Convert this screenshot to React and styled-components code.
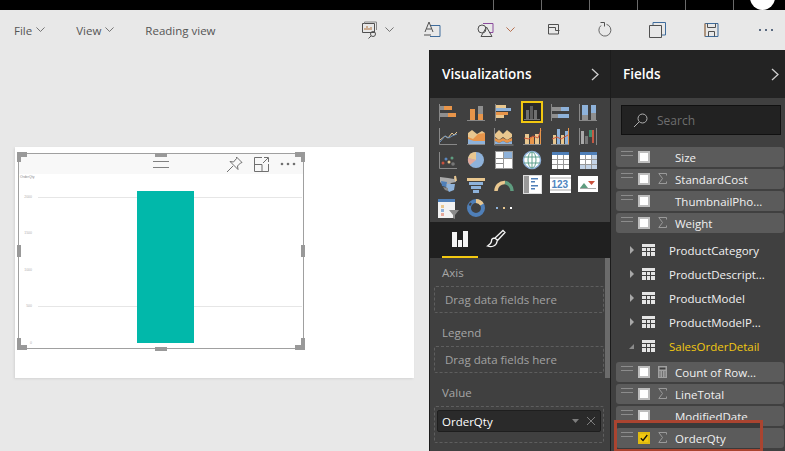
import React from "react";
import styled, { createGlobalStyle } from "styled-components";

const GlobalStyle = createGlobalStyle`
  html, body { margin: 0; padding: 0; background: #e8e8e8; }
  body { width: 785px; height: 451px; overflow: hidden; font-family: "Open Sans", "Noto Sans", sans-serif; }
`;

const Page = styled.div`
  width: 785px;
  height: 451px;
  display: flex;
  flex-direction: column;
  overflow: hidden;
`;

const TopBar = styled.div`
  height: 10px;
  flex: none;
  background: #000;
  position: relative;
  overflow: hidden;
  display: flex;
  padding-left: 493px;
  gap: 47px;
`;
const TopTick = styled.i`
  width: 1px;
  height: 10px;
  background: #6a6a6a;
`;
const TopAvatar = styled.i`
  position: absolute;
  left: 750px;
  top: -15px;
  width: 25px;
  height: 25px;
  border-radius: 50%;
  background: #fff;
`;

const Toolbar = styled.div`
  height: 40px;
  flex: none;
  background: #e8e8e8;
  display: flex;
  align-items: center;
  padding-left: 14px;
  color: #555;
  font-size: 11.5px;
`;
const MenuItem = styled.span`
  display: flex;
  align-items: center;
  gap: 4px;
  margin-right: ${(p) => p.$gap}px;
`;
const ToolIcon = styled.svg`
  flex: none;
  width: ${(p) => p.$w}px;
  height: 20px;
  margin-left: ${(p) => p.$left || 0}px;
  fill: none;
  stroke: #505050;
  stroke-width: 1;
`;
const ToolChevron = styled.span`
  flex: none;
  width: 10px;
  height: 20px;
  margin-left: ${(p) => p.$left}px;
  display: flex;
  align-items: center;
`;

const Body = styled.div`
  flex: 1;
  min-height: 0;
  display: flex;
`;

const Canvas = styled.div`
  width: 429px;
  flex: none;
  box-sizing: border-box;
  padding: 97px 15px 0;
`;
const ReportPage = styled.div`
  width: 399px;
  height: 231px;
  background: #fff;
  box-shadow: -1px 1px 2px #d4d4d4;
  padding: 6px 0 0 3px;
  box-sizing: border-box;
`;
const Visual = styled.div`
  width: 286px;
  height: 196px;
  box-sizing: border-box;
  border: 1px solid #a0a0a0;
  position: relative;
`;
const VisualHeader = styled.div`
  height: 20px;
  background: #f8f8f8;
  display: flex;
  align-items: center;
  padding-right: 7px;
  justify-content: flex-end;
  gap: 11px;
`;
const VisualGrip = styled.span`
  width: 16px;
  height: 5px;
  margin-right: 46px;
  border-top: 1px solid #808080;
  border-bottom: 1px solid #808080;
`;
const Handle = styled.i`
  position: absolute;
  background: #999;
  left: ${(p) => p.$x}px;
  top: ${(p) => p.$y}px;
  width: ${(p) => p.$w}px;
  height: ${(p) => p.$h}px;
`;
const ChartSvg = styled.svg`
  display: block;
`;

const Panel = styled.div`
  flex: none;
  width: ${(p) => p.$w}px;
  background: #404040;
  border-left: 1px solid #1c1c1c;
  display: flex;
  flex-direction: column;
  overflow: hidden;
`;
const PanelHeader = styled.div`
  height: 48px;
  flex: none;
  box-sizing: border-box;
  background: #232323;
  color: #fff;
  font-size: 13.5px;
  font-weight: 600;
  display: flex;
  align-items: center;
  justify-content: space-between;
  padding: 0 ${(p) => p.$right}px 0 12px;
`;

const VizGrid = styled.div`
  height: 124px;
  flex: none;
  box-sizing: border-box;
  padding: 3px 0 0 7px;
  display: grid;
  grid-template-columns: repeat(6, 22px);
  grid-auto-rows: 22px;
  column-gap: 6px;
  row-gap: 2px;
`;
const VizCell = styled.svg`
  width: 22px;
  height: 22px;
  display: block;
`;
const TabStrip = styled.div`
  height: 36px;
  flex: none;
  box-sizing: border-box;
  background: #202020;
  display: flex;
  padding-left: 12px;
`;
const Tab = styled.div`
  width: 36px;
  height: 36px;
  box-sizing: border-box;
  display: flex;
  align-items: center;
  justify-content: center;
  border-bottom: 2px solid ${(p) => (p.$active ? "#f2c811" : "transparent")};
`;
const Wells = styled.div`
  flex: 1;
  position: relative;
  padding: 7px 6px 0 4px;
`;
const ScrollThumb = styled.i`
  position: absolute;
  right: 0;
  top: 0;
  width: 5px;
  height: 120px;
  background: #6b6b6b;
`;
const WellLabel = styled.div`
  font-size: 11.5px;
  line-height: 16px;
  height: 16px;
  color: #a6a6a6;
  margin: 0 0 5px 8px;
`;
const Well = styled.div`
  box-sizing: border-box;
  border: 1px dashed #5e5e5e;
  border-radius: 2px;
  height: ${(p) => p.$h}px;
  padding: ${(p) => (p.$filled ? "3px 2px" : "0 10px")};
  margin-bottom: 12px;
  display: flex;
  align-items: ${(p) => (p.$filled ? "flex-start" : "center")};
  font-size: 11.5px;
  color: #a2a2a2;
`;
const Chip = styled.div`
  flex: 1;
  height: 22px;
  box-sizing: border-box;
  background: #2a2a2a;
  border-radius: 2px;
  border: 1px solid #1e1e1e;
  color: #fff;
  font-size: 11.5px;
  display: flex;
  align-items: center;
  padding: 0 4px;
  justify-content: space-between;
`;

const SearchBox = styled.div`
  margin: 7px 4px 0 10px;
  height: 30px;
  flex: none;
  box-sizing: border-box;
  background: #222;
  border: 1px solid #111;
  display: flex;
  align-items: center;
  padding-left: 11px;
  gap: 9px;
  color: #6e6e6e;
  font-size: 12px;
`;
const FieldList = styled.div`
  padding: 12px 1px 0 5px;
  display: flex;
  flex-direction: column;
`;
const FieldRow = styled.div`
  height: 20px;
  flex: none;
  margin-bottom: 2px;
  background: #5b5b5b;
  border-radius: 3px;
  display: flex;
  align-items: center;
  position: relative;
  color: #f0f0f0;
  font-size: 11.5px;
  font-weight: 500;
`;
const Grip = styled.i`
  width: 12px;
  height: 3px;
  margin: -7px 5px 0 5px;
  border-top: 1px solid #8c8c8c;
  border-bottom: 1px solid #8c8c8c;
`;
const Check = styled.span`
  width: 12px;
  height: 12px;
  box-sizing: border-box;
  background: ${(p) => (p.$on ? "#f2c811" : "#fff")};
  border: 2px solid ${(p) => (p.$on ? "#e0bb10" : "#bdbdbd")};
  display: flex;
  margin-right: 8px;
  color: #111;
`;
const FieldType = styled.span`
  width: 9px;
  height: 12px;
  margin-right: 8px;
  color: #9a9a9a;
  font-size: 12px;
  line-height: 12px;
  font-weight: 400;
  display: flex;
`;
const TableRow = styled.div`
  height: 24px;
  flex: none;
  display: flex;
  align-items: center;
  padding-left: 13px;
  font-size: 11.5px;
  color: ${(p) => (p.$active ? "#f2c811" : "#f0f0f0")};
`;
const TableSpacer = styled.div`
  height: ${(p) => p.$h}px;
  flex: none;
`;
const Caret = styled.svg`
  width: 6px;
  height: 8px;
  margin-right: 7px;
`;
const TableIcon = styled.svg`
  width: 13px;
  height: 12px;
  margin-right: 14px;
`;
const Highlight = styled.div`
  position: relative;
  width: 149px;
  height: 32px;
  margin: -8px 0 0 -2px;
  box-sizing: border-box;
  background: #3a3a3a;
  padding: 8px 0 0 2px;
  &::after {
    content: "";
    position: absolute;
    inset: 0;
    border: 3px solid #aa4430;
  }
`;
const HighlightRow = styled(FieldRow)`
  width: 168px;
`;

const Chevron = ({ color = "#666", size = 9 }) => (
  <svg width={size} height={size * 0.6} viewBox="0 0 10 6" fill="none" stroke={color}>
    <path d="M.5.5 5 5 9.5.5" />
  </svg>
);
const PanelArrow = () => (
  <svg width="8" height="13" viewBox="0 0 8 13" fill="none" stroke="#cfcfcf" strokeWidth="1.3">
    <path d="M1 1l6 5.5L1 12" />
  </svg>
);

const B = ({ x, y, w, h, c }) => <rect x={x} y={y} width={w} height={h} fill={c} />;
const O = "#e8954a";
const L = "#8eb2da";
const G = "#8f8f8f";
const T = "#e9c78f";
const AX = "#888";
const Axes = () => <path d="M2.5 3v16.5H20" fill="none" stroke={AX} />;
const AxisB = () => <path d="M2 19.5h18" fill="none" stroke={AX} />;
const AxisL = () => <path d="M2.5 3v17" fill="none" stroke={AX} />;

const vizIcons = [
  <><AxisL /><B x={3} y={5} w={4} h={4} c={G} /><B x={7} y={5} w={8} h={4} c={O} /><B x={3} y={12} w={8} h={4} c={G} /><B x={11} y={12} w={8} h={4} c={O} /></>,
  <><AxisB /><B x={5} y={8} w={5} h={4} c={O} /><B x={5} y={12} w={5} h={7} c={O} /><B x={13} y={5} w={5} h={8} c={G} /><B x={13} y={13} w={5} h={6} c={O} /></>,
  <><AxisL /><B x={3} y={4} w={10} h={3} c={T} /><B x={3} y={7} w={15} h={3} c={L} /><B x={3} y={11} w={12} h={3} c={O} /><B x={3} y={14} w={8} h={3} c={T} /></>,
  null,
  <><AxisL /><B x={3} y={6} w={9} h={4} c={G} /><B x={12} y={6} w={8} h={4} c={L} /><B x={3} y={13} w={6} h={4} c={G} /><B x={9} y={13} w={11} h={4} c={L} /></>,
  <><AxisB /><AxisL /><B x={5} y={4} w={6} h={10} c={L} /><B x={5} y={14} w={6} h={5} c={G} /><B x={14} y={4} w={5} h={8} c={L} /><B x={14} y={12} w={5} h={7} c={G} /></>,

  <><Axes /><path d="M3 15l5-4 3 2 4-5 2 2 3-3" fill="none" stroke={T} /><path d="M3 17l5-6 4 2 3-2 5-2" fill="none" stroke="#6f93bd" /></>,
  <><AxisB /><path d="M3 8l4-3 5 4 5-3 3 2v11H3z" fill={T} /><path d="M3 12l5 2 5-5 7-1v11H3z" fill={O} /><path d="M3 14l6 2 11 0v3H3z" fill={L} /></>,
  <><path d="M2 9l4-4 4 4 4-4 5 4v3l-5 3-4-3-4 3-4-3z" fill={T} /><path d="M2 13l4 2 4-2 4 2 5-2v3l-5 2-4-2-4 2-4-2z" fill={O} /><path d="M2 16l4 2 4-2 4 2 5-2v3H2z" fill={L} /><path d="M1.500 3v17h19" fill="none" stroke={AX} /></>,
  <><AxisB /><B x={4} y={9} w={4} h={10} c={T} /><B x={9} y={12} w={4} h={7} c={O} /><B x={14} y={9} w={4} h={10} c={T} /><path d="M3 13l5 1 4-3 5 2 3-8" fill="none" stroke="#d2573a" /><path d="M19.500 3v16" stroke={O} /></>,
  <><AxisB /><B x={4} y={10} w={3} h={9} c={T} /><B x={8} y={4} w={3} h={15} c={L} /><B x={12} y={10} w={3} h={9} c={T} /><B x={16} y={6} w={3} h={13} c={L} /><path d="M3 14l5-2 4 2 7-4" fill="none" stroke="#d2573a" /><path d="M19.500 3v16" stroke={O} /></>,
  <><path d="M2.500 3v17M19.500 3v17" stroke={AX} fill="none" /><B x={4} y={6} w={3} h={13} c="#aaa" /><B x={8} y={11} w={3} h={8} c="#777" /><B x={12} y={5} w={3} h={7} c="#3f8f6f" /><B x={15} y={5} w={2} h={13} c="#c45a45" /></>,

  <><Axes /><circle cx={6} cy={14} r={1.5} fill="#c9503c" /><circle cx={9} cy={10} r={1.5} fill="#5b86bd" /><circle cx={15} cy={9} r={1.5} fill="#5e9c7f" /><circle cx={12} cy={13} r={1.5} fill={T} /><circle cx={16} cy={15} r={1.800} fill="#777" /></>,
  <><circle cx={11} cy={11} r={8} fill={L} /><path d="M11 11V3a8 8 0 0 0-8 6z" fill={T} /><path d="M11 11 3 9a8 8 0 0 0 2 7z" fill="#e0a99c" /></>,
  <><B x={2} y={2} w={18} h={18} c="#999" /><B x={3} y={3} w={7} h={16} c="#fff" /><B x={11} y={3} w={8} h={6} c={L} /><B x={11} y={10} w={8} h={9} c="#fff" /><B x={3} y={9} w={7} h={1} c="#888" /><B x={3} y={14} w={7} h={1} c="#888" /></>,
  <><circle cx={11} cy={11} r={8.500} fill="#fff" stroke={L} strokeWidth="1.500" /><ellipse cx={11} cy={11} rx={4} ry={8} fill="none" stroke="#5fa08e" /><path d="M3 8h16M3 14h16M11 3v16" stroke="#5fa08e" fill="none" /></>,
  <><B x={3} y={3} w={17} h={17} c="#fff" /><B x={3} y={3} w={17} h={3} c="#4f7fb8" /><path d="M8.500 6v14M14.500 6v14M3 10.500h17M3 15.500h17" stroke="#999" fill="none" /></>,
  <><B x={3} y={3} w={17} h={17} c="#fff" /><B x={3} y={3} w={17} h={3} c="#4f7fb8" /><B x={14} y={6} w={6} h={14} c="#c3d3e6" /><B x={3} y={15} w={17} h={5} c="#c3d3e6" /><path d="M8.500 6v14M14.500 6v14M3 10.500h17M3 15.500h17" stroke="#999" fill="none" /></>,

  <><path d="M3 4l8 1 6 1 1-3 1 6-5 1-2 3-6-1-3-3z" fill="#aaa" /><path d="M4 8l6 1-1 5-4-1z" fill="#4f7fb8" /><path d="M10 11l8 0-1 6-5 2-3-5z" fill={L} /><path d="M18 3l1 5" stroke={T} strokeWidth="2" /><path d="M6 14l5 1 0 3-3-1z" fill="#888" /></>,
  <><B x={2} y={5} w={18} h={3} c={T} /><B x={4} y={9} w={14} h={3} c={L} /><B x={6} y={13} w={10} h={3} c={L} /><B x={8} y={17} w={6} h={3} c={L} /></>,
  <><path d="M3 18a8.500 8.500 0 0 1 9-8.500" fill="none" stroke={T} strokeWidth="3.500" /><path d="M12 9.500a8.500 8.500 0 0 1 7 8.500" fill="none" stroke="#5e9c7f" strokeWidth="3.500" /></>,
  <><B x={2} y={2} w={19} h={19} c="#ddd" /><B x={3} y={3} w={17} h={17} c="#fff" /><B x={3} y={3} w={5} h={17} c="#999" /><B x={10} y={5} w={7} h={1.500} c="#4f7fb8" /><B x={10} y={8} w={4} h={1.500} c="#4f7fb8" /><B x={10} y={12} w={7} h={1.500} c="#4f7fb8" /><B x={10} y={15} w={4} h={1.500} c="#4f7fb8" /></>,
  <><B x={1} y={2} w={21} h={18} c="#fff" /><path d="M1 5h21M1 17h21" stroke="#aaa" /><text x="2.500" y="15" fontSize="10" fontWeight="700" fill="#4f86c0" fontFamily="Liberation Sans">123</text></>,
  <><B x={1} y={3} w={20} h={16} c="#fff" /><path d="M3 15l4-5 4 5z" fill="#5e9c7f" /><path d="M11 8h7l-3.500 4z" fill="#c9503c" /><path d="M3 15.500h16" stroke="#aaa" /></>,

  <><B x={1} y={2} w={17} h={19} c="#f2f2f2" /><B x={1} y={2} w={17} h={3} c="#4f7fb8" /><B x={4} y={8} w={3} h={3} c={T} /><B x={4} y={12} w={3} h={3} c={L} /><B x={4} y={16} w={3} h={3} c="#e6a99c" /><path d="M12 13h10l-4 5v4l-2-1v-3z" fill="#8a8a8a" /></>,
  <><circle cx={11} cy={11} r={7} fill="none" stroke="#4f7fb8" strokeWidth="4" /><path d="M11 4a7 7 0 0 1 6 3.500" fill="none" stroke={T} strokeWidth="4" /><path d="M4.500 8.500 6 6" fill="none" stroke="#404040" strokeWidth="2" /></>,
  <><B x={3} y={10} w={2} h={2} c={L} /><B x={10} y={10} w={2} h={2} c={T} /><B x={17} y={10} w={2} h={2} c="#fff" /></>,
];

const SelectedViz = () => (
  <>
    <rect x="1" y="1" width="20" height="20" fill="#2a2a2a" stroke="#f2c811" strokeWidth="2" />
    <path d="M3 18.500h16" stroke="#777" />
    <B x={5} y={9} w={3} h={9} c="#707070" />
    <B x={9} y={5} w={3} h={13} c="#5e5e5e" />
    <B x={13} y={9} w={3} h={9} c="#707070" />
  </>
);

const Sigma = () => (
  <svg width="9" height="11" viewBox="0 0 9 11" fill="none" stroke="#9a9a9a">
    <path d="M8.500 2.500V.5H.8l3.700 5-3.700 5h7.700V8.500" />
  </svg>
);
const CalcIcon = () => (
  <svg width="9" height="12" viewBox="0 0 9 12">
    <rect width="9" height="12" fill="#a0a0a0" />
    <rect x="1.500" y="1.500" width="6" height="2" fill="#404040" />
    <path d="M1.500 6h1M4 6h1M6.500 6h1M1.500 8h1M4 8h1M6.500 8h1M1.500 10h1M4 10h1M6.500 10h1" stroke="#404040" />
  </svg>
);

const Field = ({ name, kind, on, as: As = FieldRow }) => (
  <As>
    <Grip />
    <Check $on={on}>
      {on && (
        <svg width="8" height="8" viewBox="0 0 8 8" fill="none" stroke="#111" strokeWidth="1.300">
          <path d="M.8 4.300 3 6.500 7.300 1" />
        </svg>
      )}
    </Check>
    <FieldType>{kind === "sum" && <Sigma />}{kind === "calc" && <CalcIcon />}</FieldType>
    {name}
  </As>
);

const TableEntry = ({ name, active }) => (
  <TableRow $active={active}>
    <Caret viewBox="0 0 6 8">
      {active ? <path d="M0 7h5V2z" fill="#8a8a8a" /> : <path d="M1 0l4 4-4 4z" fill="#a8a8a8" />}
    </Caret>
    <TableIcon viewBox="0 0 13 12">
      <rect width="13" height="12" fill="#e4e4e4" />
      <path d="M4.500 3v9M8.500 3v9M0 3.500h13M0 7.500h13" stroke="#404040" />
    </TableIcon>
    {name}
  </TableRow>
);

const handles = [
  [-2, -2, 10, 5], [-2, -2, 4, 10], [276, -2, 10, 5], [282, -2, 4, 10],
  [136, -1, 12, 4], [136, 193, 12, 4], [-2, 91, 4, 12], [282, 91, 4, 12],
  [-2, 191, 10, 5], [-2, 184, 4, 12], [276, 191, 10, 5], [282, 184, 4, 12],
];

const topFields = [
  { name: "Size" },
  { name: "StandardCost", kind: "sum" },
  { name: "ThumbnailPho..." },
  { name: "Weight", kind: "sum" },
];
const tables = ["ProductCategory", "ProductDescript...", "ProductModel", "ProductModelP..."];

export default function App() {
  return (
    <Page>
      <GlobalStyle />
      <TopBar>
        {[0, 1, 2, 3, 4, 5].map((i) => <TopTick key={i} />)}
        <TopAvatar />
      </TopBar>

      <Toolbar>
        <MenuItem $gap={31}>File <Chevron /></MenuItem>
        <MenuItem $gap={31}>View <Chevron /></MenuItem>
        <MenuItem $gap={0}>Reading view</MenuItem>
        <ToolIcon $w={18} $left={145} viewBox="0 0 18 20">
          <path d="M1.500 3.500h12v9h-12z" />
          <path d="M3.500 3.500v-1.500h12v8" stroke="#888" />
          <path d="M4 10V8M6 10V6M8 10V8M10 10V7" stroke="#b0703a" />
          <circle cx="12" cy="14" r="2.500" />
          <path d="M10 16l-2.500 2.500" />
        </ToolIcon>
        <ToolChevron $left={6}><Chevron /></ToolChevron>
        <ToolIcon $w={18} $left={28} viewBox="0 0 18 20">
          <path d="M7 5.500h10v11H7" stroke="#3f6c9c" />
          <path d="M2 12 6 2l4 10M3.500 9h5" />
          <path d="M1 15h7" />
        </ToolIcon>
        <ToolIcon $w={17} $left={36} viewBox="0 0 17 20">
          <path d="M6 3.500h10v9H12" stroke="#8a4a9c" />
          <circle cx="5" cy="9" r="4" />
          <path d="M9.500 7 15 16.500H4z" />
        </ToolIcon>
        <ToolChevron $left={12}><Chevron color="#b0603a" /></ToolChevron>
        <ToolIcon $w={12} $left={32} viewBox="0 0 12 20">
          <path d="M.5 4.500h10V14H.5z" />
          <path d="M.5 7.500h7v3h4" />
        </ToolIcon>
        <ToolIcon $w={14} $left={38} viewBox="0 0 14 20">
          <path d="M8.500 4.300A6 6 0 1 1 3 5.500" stroke="#666" />
          <path d="M2.500 2.500h4v4" />
        </ToolIcon>
        <ToolIcon $w={17} $left={37} viewBox="0 0 17 20">
          <path d="M.5 5.500h12v12H.5z" />
          <path d="M4 5V2.500h12.500V15H13" stroke="#3f6c9c" />
        </ToolIcon>
        <ToolIcon $w={15} $left={38} viewBox="0 0 15 20">
          <path d="M1 3.500h13v13H1z" stroke="#3f6c9c" />
          <path d="M3.500 3.500v4h8v-4M4.500 16.500v-5h6v5" />
          <path d="M1 3.500v13" stroke="#c9803c" />
        </ToolIcon>
        <ToolIcon $w={16} $left={39} viewBox="0 0 16 20">
          <path d="M1 10h2M7 10h2M13 10h2" strokeWidth="2" stroke="#5a6a80" />
        </ToolIcon>
      </Toolbar>

      <Body>
        <Canvas>
          <ReportPage>
            <Visual>
              <VisualHeader>
                <VisualGrip />
                <svg width="17" height="17" viewBox="0 0 17 17" fill="none" stroke="#707070">
                  <path d="M10.500 1 16 6.500 14.500 7l-3 3 .5 3.500L4 5.500 7.500 6l3-3.500zM7 10l-6 6" />
                </svg>
                <svg width="15" height="15" viewBox="0 0 15 15" fill="none" stroke="#707070">
                  <path d="M8 .5H.5v14h14V7M.5 7.500H8v7M9 6l5-5M10 .5h4.500V5" />
                </svg>
                <svg width="16" height="4" viewBox="0 0 16 4" fill="#707070">
                  <circle cx="2" cy="2" r="1.300" /><circle cx="8" cy="2" r="1.300" /><circle cx="14" cy="2" r="1.300" />
                </svg>
              </VisualHeader>
              <ChartSvg width="284" height="174" viewBox="0 0 284 174">
                <text x="1" y="4" fontSize="3.500" fill="#888" fontFamily="Liberation Sans">OrderQty</text>
                <path d="M19 23.500h264M19 132.500h264" stroke="#e6e6e6" />
                {[["2000", 23], ["1500", 59], ["1000", 96], ["500", 132], ["0", 169]].map(([t, y]) => (
                  <text key={t} x="13" y={y + 1} textAnchor="end" fontSize="3.500" fill="#b0b0b0" fontFamily="Liberation Sans">{t}</text>
                ))}
                <rect x="118" y="17" width="57" height="152" fill="#01b8aa" />
              </ChartSvg>
              {handles.map(([x, y, w, h], i) => (
                <Handle key={i} $x={x} $y={y} $w={w} $h={h} />
              ))}
            </Visual>
          </ReportPage>
        </Canvas>

        <Panel $w={180}>
          <PanelHeader $right={11}>Visualizations <PanelArrow /></PanelHeader>
          <VizGrid>
            {vizIcons.map((icon, i) => (
              <VizCell key={i} viewBox="0 0 22 22">{icon || <SelectedViz />}</VizCell>
            ))}
          </VizGrid>
          <TabStrip>
            <Tab $active>
              <svg width="16" height="16" viewBox="0 0 16 16" fill="#f4f4f4">
                <rect x="0" y="1" width="5" height="15" /><rect x="6" y="9" width="4" height="7" /><rect x="11" y="0" width="5" height="16" />
              </svg>
            </Tab>
            <Tab>
              <svg width="20" height="20" viewBox="0 0 20 20" fill="none" stroke="#f4f4f4" strokeWidth="1.300">
                <path d="M17 1.500 19 3.500 11.500 11.500 9 9zM9 9c-2 0-3.500 1-3.500 3S4 15.500 1.500 17c4 1.500 9 0 9.500-4.500.1-.5.300-.8.500-1" />
              </svg>
            </Tab>
          </TabStrip>
          <Wells>
            <ScrollThumb />
            <WellLabel>Axis</WellLabel>
            <Well $h={27}>Drag data fields here</Well>
            <WellLabel>Legend</WellLabel>
            <Well $h={27}>Drag data fields here</Well>
            <WellLabel>Value</WellLabel>
            <Well $h={37} $filled>
              <Chip>
                OrderQty
                <svg width="24" height="10" viewBox="0 0 24 10" fill="none" stroke="#7d7d7d">
                  <path d="M0 3h7L3.500 7z" fill="#7d7d7d" stroke="none" /><path d="M15 1l8 8M23 1l-8 8" />
                </svg>
              </Chip>
            </Well>
          </Wells>
        </Panel>

        <Panel $w={174}>
          <PanelHeader $right={6}>Fields <PanelArrow /></PanelHeader>
          <SearchBox>
            <svg width="15" height="15" viewBox="0 0 15 15" fill="none" stroke="#b0b0b0">
              <circle cx="9.500" cy="5.500" r="4.500" /><path d="M6 9 1 14" />
            </svg>
            Search
          </SearchBox>
          <FieldList>
            {topFields.map((f) => <Field key={f.name} {...f} />)}
            <TableSpacer $h={3} />
            {tables.map((t) => <TableEntry key={t} name={t} />)}
            <TableEntry name="SalesOrderDetail" active />
            <TableSpacer $h={4} />
            <Field name="Count of Row..." kind="calc" />
            <Field name="LineTotal" kind="sum" />
            <Field name="ModifiedDate" />
            <Highlight>
              <Field name="OrderQty" kind="sum" on as={HighlightRow} />
            </Highlight>
          </FieldList>
        </Panel>
      </Body>
    </Page>
  );
}
